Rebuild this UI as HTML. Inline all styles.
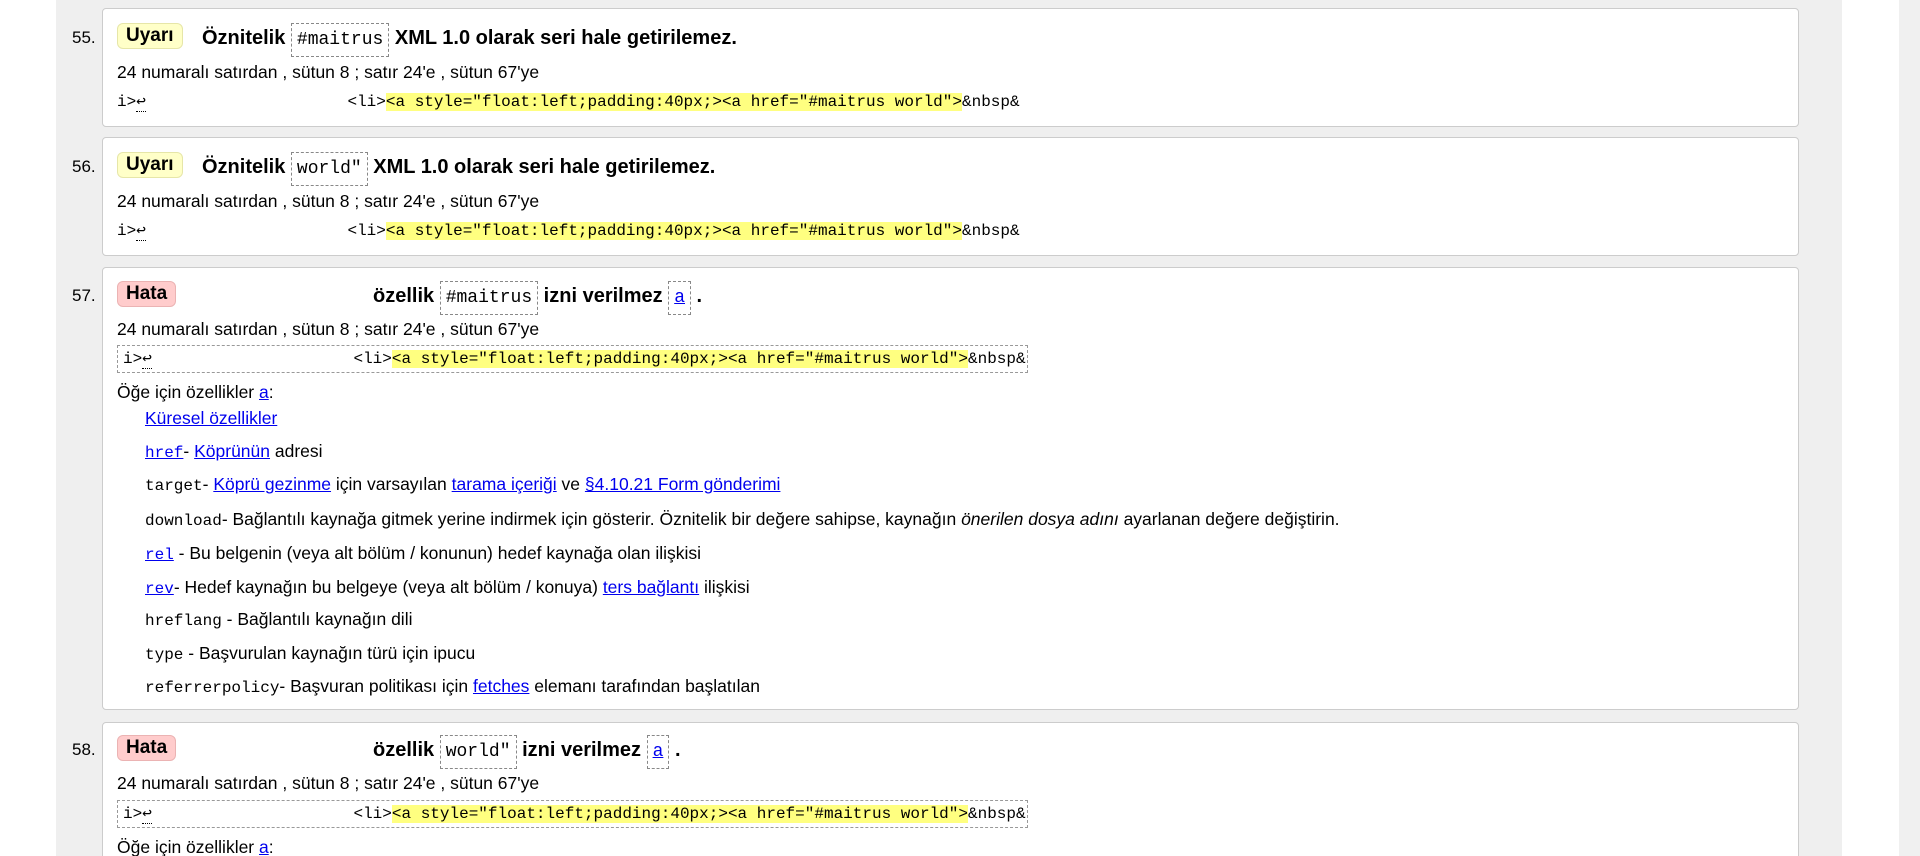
<!DOCTYPE html>
<html><head><meta charset="utf-8"><style>
*{margin:0;padding:0;box-sizing:border-box}
html,body{width:1920px;height:856px;overflow:hidden}
body{background:#fff;font-family:"Liberation Sans",Arial,sans-serif;font-size:17.5px;color:#000;position:relative}
.gray{position:absolute;left:56px;top:0;width:1786px;height:856px;background:#efefef}
.sb{position:absolute;left:1899px;top:0;width:21px;height:856px;background:#f0f0f0}
.thumb{position:absolute;left:1902px;top:217px;width:15px;height:20px;background:#c1c1c1}
.arr{position:absolute;left:1904px;top:8px;width:0;height:0;border-left:5px solid transparent;border-right:5px solid transparent;border-bottom:6px solid #505050}
.card{position:absolute;left:102px;width:1697px;background:#fff;border:1px solid #ccc;border-radius:4px;overflow:hidden}
.l{position:absolute;white-space:pre;line-height:20px}
.num{position:absolute;left:72px;font-size:17px;line-height:20px}
.badge{position:absolute;font-weight:bold;font-size:19px;border-radius:6px;line-height:24px;padding:0 8px;border:1px solid}
.w{background:#ffffc8;border-color:#e6e6a8}
.e{background:#ffcccc;border-color:#ebb3b3}
.t{font-weight:bold;font-size:20px}
.m{font-family:"Liberation Mono","DejaVu Sans Mono",monospace;font-size:16px}
.lm{font-family:"Liberation Mono","DejaVu Sans Mono",monospace;font-size:16px}
.cb{font-family:"Liberation Mono",monospace;font-weight:normal;font-size:18px;border:1px dashed #888;padding:6px 5px}
.hl{background:#ffff80}
a{color:#00e;text-decoration:underline}
.box{position:absolute;left:14px;width:911px;height:28px;border:1px dashed #999}
.u{border-bottom:1px dotted #000}
</style></head><body>
<div class="gray"></div>
<div class="sb"><div class="arr"></div><div class="thumb"></div></div>

<div class="num" style="top:28px">55.</div>
<div class="num" style="top:157px">56.</div>
<div class="num" style="top:286px">57.</div>
<div class="num" style="top:740px">58.</div>

<div class="card" style="top:8px;height:119px">
 <div class="badge w" style="left:14px;top:14px">Uyarı</div>
 <div class="l t" style="left:99px;top:19px">Öznitelik <span class="cb">#maitrus</span> XML 1.0 olarak seri hale getirilemez.</div>
 <div class="l" style="left:14px;top:53px">24 numaralı satırdan , sütun 8 ; satır 24'e , sütun 67'ye</div>
 <div class="l m" style="left:14px;top:83px">i&gt;<span class="u">↩</span>                     &lt;li&gt;<span class="hl">&lt;a style="float:left;padding:40px;&gt;&lt;a href="#maitrus world"&gt;</span>&amp;nbsp&amp;</div>
</div>

<div class="card" style="top:137px;height:119px">
 <div class="badge w" style="left:14px;top:14px">Uyarı</div>
 <div class="l t" style="left:99px;top:19px">Öznitelik <span class="cb">world"</span> XML 1.0 olarak seri hale getirilemez.</div>
 <div class="l" style="left:14px;top:53px">24 numaralı satırdan , sütun 8 ; satır 24'e , sütun 67'ye</div>
 <div class="l m" style="left:14px;top:83px">i&gt;<span class="u">↩</span>                     &lt;li&gt;<span class="hl">&lt;a style="float:left;padding:40px;&gt;&lt;a href="#maitrus world"&gt;</span>&amp;nbsp&amp;</div>
</div>

<div class="card" style="top:267px;height:443px">
 <div class="badge e" style="left:14px;top:13px">Hata</div>
 <div class="l t" style="left:270px;top:18px">özellik <span class="cb">#maitrus</span> izni verilmez <span class="cb"><a>a</a></span> .</div>
 <div class="l" style="left:14px;top:51px">24 numaralı satırdan , sütun 8 ; satır 24'e , sütun 67'ye</div>
 <div class="box" style="top:77px"></div>
 <div class="l m" style="left:20px;top:81px">i&gt;<span class="u">↩</span>                     &lt;li&gt;<span class="hl">&lt;a style="float:left;padding:40px;&gt;&lt;a href="#maitrus world"&gt;</span>&amp;nbsp&amp;</div>
 <div class="l" style="left:14px;top:114px">Öğe için özellikler <a>a</a>:</div>
 <div class="l" style="left:42px;top:140px"><a>Küresel özellikler</a></div>
 <div class="l" style="left:42px;top:173px"><a class="lm">href</a>- <a>Köprünün</a> adresi</div>
 <div class="l" style="left:42px;top:206px"><span class="lm">target</span>- <a>Köprü gezinme</a> için varsayılan <a>tarama içeriği</a> ve <a>§4.10.21 Form gönderimi</a></div>
 <div class="l" style="left:42px;top:241px"><span class="lm">download</span>- Bağlantılı kaynağa gitmek yerine indirmek için gösterir. Öznitelik bir değere sahipse, kaynağın <i>önerilen dosya adını</i> ayarlanan değere değiştirin.</div>
 <div class="l" style="left:42px;top:275px"><a class="lm">rel</a> - Bu belgenin (veya alt bölüm / konunun) hedef kaynağa olan ilişkisi</div>
 <div class="l" style="left:42px;top:309px"><a class="lm">rev</a>- Hedef kaynağın bu belgeye (veya alt bölüm / konuya) <a>ters bağlantı</a> ilişkisi</div>
 <div class="l" style="left:42px;top:341px"><span class="lm">hreflang</span> - Bağlantılı kaynağın dili</div>
 <div class="l" style="left:42px;top:375px"><span class="lm">type</span> - Başvurulan kaynağın türü için ipucu</div>
 <div class="l" style="left:42px;top:408px"><span class="lm">referrerpolicy</span>- Başvuran politikası için <a>fetches</a> elemanı tarafından başlatılan</div>
</div>

<div class="card" style="top:722px;height:140px">
 <div class="badge e" style="left:14px;top:12px">Hata</div>
 <div class="l t" style="left:270px;top:17px">özellik <span class="cb">world"</span> izni verilmez <span class="cb"><a>a</a></span> .</div>
 <div class="l" style="left:14px;top:50px">24 numaralı satırdan , sütun 8 ; satır 24'e , sütun 67'ye</div>
 <div class="box" style="top:77px"></div>
 <div class="l m" style="left:20px;top:81px">i&gt;<span class="u">↩</span>                     &lt;li&gt;<span class="hl">&lt;a style="float:left;padding:40px;&gt;&lt;a href="#maitrus world"&gt;</span>&amp;nbsp&amp;</div>
 <div class="l" style="left:14px;top:114px">Öğe için özellikler <a>a</a>:</div>
</div>
</body></html>
